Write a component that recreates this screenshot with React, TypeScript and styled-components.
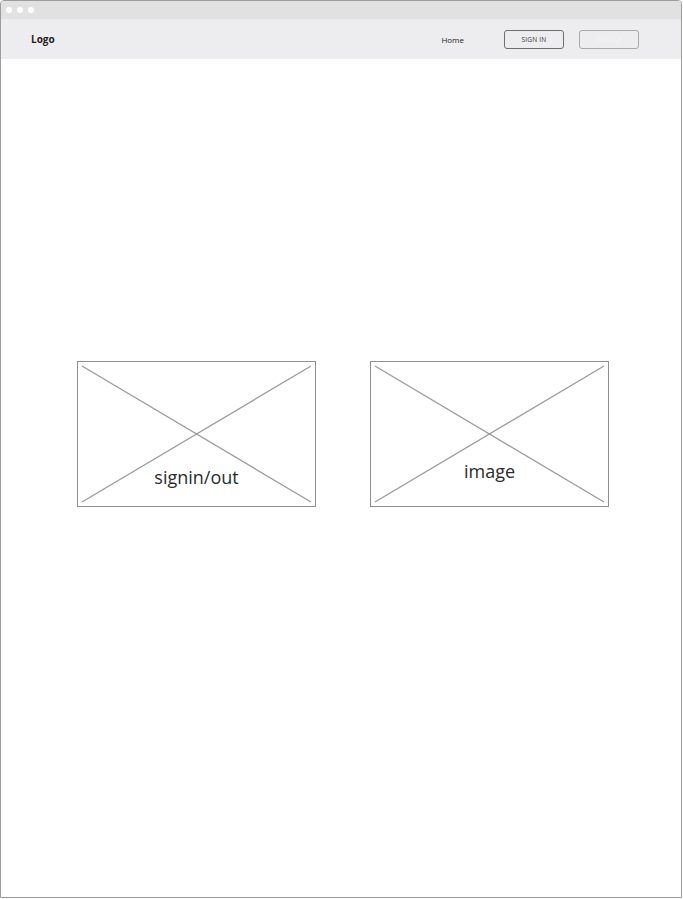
import React from 'react';
import styled, { createGlobalStyle } from 'styled-components';

const GlobalStyle = createGlobalStyle`
  html, body {
    margin: 0;
    padding: 0;
    background: #ffffff;
  }
  body {
    font-family: 'Open Sans', 'Liberation Sans', sans-serif;
  }
`;

const Frame = styled.div`
  box-sizing: border-box;
  width: 682px;
  height: 898px;
  border: 1px solid #9c9c9c;
  border-radius: 4px 4px 0 0;
  display: flex;
  flex-direction: column;
  overflow: hidden;
  background: #ffffff;
`;

const TitleBar = styled.div`
  height: 18px;
  background: #e1e1e1;
  display: flex;
  align-items: center;
  gap: 5px;
  padding-left: 5px;
`;

const Dot = styled.span`
  width: 6px;
  height: 6px;
  border-radius: 50%;
  background: #ffffff;
`;

const NavBar = styled.div`
  height: 40px;
  background: #ededef;
  display: flex;
  align-items: center;
  padding: 0 42px 0 30px;
`;

const Logo = styled.div`
  font-size: 10px;
  font-weight: 700;
  color: #1e1e1e;
  flex-grow: 1;
`;

const NavLink = styled.span`
  font-size: 8px;
  color: #222222;
  margin-right: 25px;
`;

const NavButton = styled.button<{ $ghost?: boolean }>`
  box-sizing: border-box;
  width: 60px;
  height: 19px;
  margin-left: 15px;
  border: 1px solid ${(props) => (props.$ghost ? '#a9a9a9' : '#6f6f6f')};
  border-radius: 3px;
  background: transparent;
  color: ${(props) => (props.$ghost ? '#f4f4f4' : '#333333')};
  font-family: 'Open Sans', 'Liberation Sans', sans-serif;
  font-size: 6.5px;
  letter-spacing: 0.2px;
  padding: 0;
`;

const Content = styled.div`
  flex-grow: 1;
  display: flex;
  gap: 54px;
  padding: 302px 0 0 76px;
  align-items: flex-start;
`;

const Placeholder = styled.div<{ $bottom: number }>`
  position: relative;
  box-sizing: border-box;
  width: 239px;
  height: 146px;
  border: 1px solid #8f8f8f;
  display: flex;
  justify-content: center;
  align-items: flex-end;
  padding-bottom: ${(props) => props.$bottom}px;
`;

const Cross = styled.svg`
  position: absolute;
  inset: 0;
  width: 100%;
  height: 100%;
`;

const Label = styled.span`
  position: relative;
  font-size: 18px;
  color: #2b2b2b;
  line-height: 24px;
`;

const ImageBox: React.FC<{ label: string; bottom: number }> = function ({
  label,
  bottom,
}) {
  return (
    <Placeholder $bottom={bottom}>
      <Cross viewBox="0 0 237 144" preserveAspectRatio="none">
        <line x1="4" y1="4" x2="233" y2="140" stroke="#9a9a9a" strokeWidth="1.3" />
        <line x1="233" y1="4" x2="4" y2="140" stroke="#9a9a9a" strokeWidth="1.3" />
      </Cross>
      <Label>{label}</Label>
    </Placeholder>
  );
};

const App: React.FC = function () {
  return (
    <>
      <GlobalStyle />
      <Frame>
        <TitleBar>
          <Dot />
          <Dot />
          <Dot />
        </TitleBar>
        <NavBar>
          <Logo>Logo</Logo>
          <NavLink>Home</NavLink>
          <NavButton>SIGN IN</NavButton>
          <NavButton $ghost>SIGN UP</NavButton>
        </NavBar>
        <Content>
          <ImageBox label="signin/out" bottom={17} />
          <ImageBox label="image" bottom={23} />
        </Content>
      </Frame>
    </>
  );
};

export default App;
